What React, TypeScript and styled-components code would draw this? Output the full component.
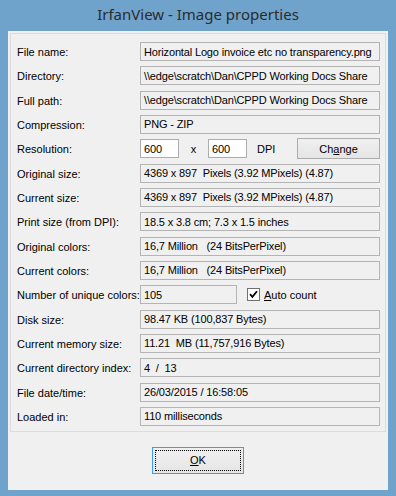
import React from 'react';
import styled, { createGlobalStyle } from 'styled-components';

const GlobalStyle = createGlobalStyle`
  html, body {
    margin: 0;
    padding: 0;
    background: #6fa3cc;
  }
  body {
    font-family: "Liberation Sans", Arial, sans-serif;
    font-size: 11px;
    color: #000;
  }
`;

const Window = styled.div`
  width: 396px;
  height: 496px;
  box-sizing: border-box;
  background: #6fa3cc;
  padding: 0 8px 6px 8px;
  display: flex;
  flex-direction: column;
`;

const TitleBar = styled.div`
  height: 31px;
  display: flex;
  align-items: center;
  justify-content: center;
  padding-bottom: 4px;
  box-sizing: border-box;
  font-family: "Noto Sans", "Open Sans", sans-serif;
  font-size: 15px;
  color: #2b2b2b;
`;

const Client = styled.div`
  flex: 1;
  background: #f0f0f0;
  padding: 2px;
  display: flex;
  flex-direction: column;
`;

const GroupBox = styled.div`
  border: 1px solid #dcdcdc;
  padding: 8px 5px 5px 6px;
`;

const FieldGrid = styled.div`
  display: grid;
  grid-template-columns: 123px minmax(0, 1fr);
  grid-auto-rows: 19px;
  row-gap: 5.33px;
  align-items: center;
`;

const Label = styled.div`
  white-space: nowrap;
  padding-top: 1px;
`;

const Field = styled.div<{ $editable?: boolean; $width?: number }>`
  height: 19px;
  min-width: 0;
  box-sizing: border-box;
  border: 1px solid ${p => (p.$editable ? '#abadb3' : '#b4b4b4')};
  background: ${p => (p.$editable ? '#fff' : '#f0f0f0')};
  padding: 0 3px;
  display: flex;
  align-items: center;
  white-space: pre;
  overflow: hidden;
  letter-spacing: -0.15px;
  ${p => (p.$width ? `width: ${p.$width}px; flex: none;` : '')}
`;

const Inline = styled.div`
  display: flex;
  align-items: center;
  height: 19px;
`;

const Sep = styled.span<{ $w: number }>`
  width: ${p => p.$w}px;
  text-align: center;
  flex: none;
`;

const Button = styled.button<{ $w: number; $h: number; $default?: boolean }>`
  width: ${p => p.$w}px;
  height: ${p => p.$h}px;
  flex: none;
  box-sizing: border-box;
  font: inherit;
  color: #000;
  border: 1px solid ${p => (p.$default ? '#3c9cf0' : '#acacac')};
  background: linear-gradient(#f0f0f0, #e5e5e5);
  padding: 0;
  display: flex;
  align-items: center;
  justify-content: center;
  position: relative;
  u { text-decoration: underline; }
`;

const ChangeButton = styled(Button)`
  margin-left: auto;
`;

const FocusRect = styled.span`
  position: absolute;
  inset: 2px;
  border: 1px dotted #000;
`;

const CheckWrap = styled.label`
  display: flex;
  align-items: center;
  margin-left: 10px;
  gap: 4px;
`;

const CheckBox = styled.span`
  width: 13px;
  height: 13px;
  box-sizing: border-box;
  border: 1px solid #707070;
  background: #fff;
  display: flex;
  align-items: center;
  justify-content: center;
`;

const Footer = styled.div`
  flex: 1;
  display: flex;
  justify-content: center;
  padding-top: 15px;
`;

const rows: [string, string][] = [
  ['File name:', 'Horizontal Logo invoice etc no transparency.png'],
  ['Directory:', '\\\\edge\\scratch\\Dan\\CPPD Working Docs Share'],
  ['Full path:', '\\\\edge\\scratch\\Dan\\CPPD Working Docs Share'],
  ['Compression:', 'PNG - ZIP'],
];

const rows2: [string, string][] = [
  ['Original size:', '4369 x 897  Pixels (3.92 MPixels) (4.87)'],
  ['Current size:', '4369 x 897  Pixels (3.92 MPixels) (4.87)'],
  ['Print size (from DPI):', '18.5 x 3.8 cm; 7.3 x 1.5 inches'],
  ['Original colors:', '16,7 Million   (24 BitsPerPixel)'],
  ['Current colors:', '16,7 Million   (24 BitsPerPixel)'],
];

const rows3: [string, string][] = [
  ['Disk size:', '98.47 KB (100,837 Bytes)'],
  ['Current memory size:', '11.21  MB (11,757,916 Bytes)'],
  ['Current directory index:', '4  /  13'],
  ['File date/time:', '26/03/2015 / 16:58:05'],
  ['Loaded in:', '110 milliseconds'],
];

const renderRows = (list: [string, string][]) =>
  list.map(([label, value]) => (
    <React.Fragment key={label}>
      <Label>{label}</Label>
      <Field>{value}</Field>
    </React.Fragment>
  ));

export default function App() {
  return (
    <>
      <GlobalStyle />
      <Window>
        <TitleBar>IrfanView - Image properties</TitleBar>
        <Client>
          <GroupBox>
            <FieldGrid>
              {renderRows(rows)}
              <Label>Resolution:</Label>
              <Inline>
                <Field $editable $width={39}>600</Field>
                <Sep $w={29}>x</Sep>
                <Field $editable $width={39}>600</Field>
                <Sep $w={10} />
                <span>DPI</span>
                <ChangeButton $w={83} $h={21}>
                  <span>Ch<u>a</u>nge</span>
                </ChangeButton>
              </Inline>
              {renderRows(rows2)}
              <Label>Number of unique colors:</Label>
              <Inline>
                <Field $width={97}>105</Field>
                <CheckWrap>
                  <CheckBox>
                    <svg width="9" height="9" viewBox="0 0 9 9">
                      <path d="M1 4.2 L3.4 6.8 L8 1.2" stroke="#000" strokeWidth="1.8" fill="none" />
                    </svg>
                  </CheckBox>
                  <span><u>A</u>uto count</span>
                </CheckWrap>
              </Inline>
              {renderRows(rows3)}
            </FieldGrid>
          </GroupBox>
          <Footer>
            <Button $w={92} $h={27} $default>
              <FocusRect />
              <span><u>O</u>K</span>
            </Button>
          </Footer>
        </Client>
      </Window>
    </>
  );
}
